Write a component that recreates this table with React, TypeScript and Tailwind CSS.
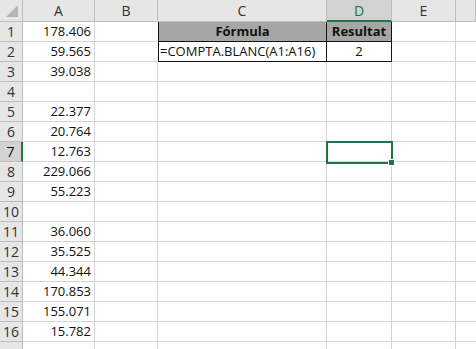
import type { ReactNode } from 'react';

const COLS = ['A', 'B', 'C', 'D', 'E', ''];
const VALUES = [
  '178.406', '59.565', '39.038', '', '22.377', '20.764', '12.763', '229.066',
  '55.223', '', '36.060', '35.525', '44.344', '170.853', '155.071', '15.782', '',
];

const SEL_COL = 'D';
const SEL_ROW = 7;
// last row only peeks in at the bottom edge, so its number is left off
const LAST_LABELLED = 16;

function Cell({ className = '', children }: { className?: string; children?: ReactNode }) {
  return <div className={`flex items-center overflow-hidden whitespace-nowrap ${className}`}>{children}</div>;
}

export default function App() {
  return (
    <div
      className="relative w-[476px] h-[349px] overflow-hidden bg-white text-[13px] text-[#111]"
      style={{ fontFamily: '"Open Sans", "Noto Sans", sans-serif' }}
    >
      <div className="grid grid-cols-[23px_72px_63px_169px_65px_64px_1fr] grid-rows-[22px_repeat(17,20px)]">
        {/* Corner */}
        <Cell className="bg-[#e6e6e6] border-r border-b border-[#bdbdbd] justify-end items-end">
          <svg width="14" height="14" viewBox="0 0 14 14" className="mr-[3px] mb-[3px]">
            <path d="M13 1V13H1Z" fill="#b5b5b5" />
          </svg>
        </Cell>

        {/* Column headers */}
        {COLS.map((c) => (
          <Cell
            key={`h-${c}`}
            className={`justify-center text-[14px] border-r ${
              c === SEL_COL
                ? 'bg-[#d2d2d2] text-[#217346] border-[#bdbdbd] border-b-2 border-b-[#217346]'
                : 'bg-[#e6e6e6] text-[#333] border-[#bdbdbd] border-b'
            }`}
          >
            {c}
          </Cell>
        ))}

        {VALUES.map((v, i) => {
          const row = i + 1;
          const inTable = row <= 2;
          return [
            <Cell
              key={`r-${row}`}
              className={`justify-center text-[14px] border-b ${
                row === SEL_ROW
                  ? 'bg-[#d2d2d2] border-[#bdbdbd] border-r-2 border-r-[#217346]'
                  : 'bg-[#e6e6e6] text-[#333] border-r border-[#bdbdbd]'
              }`}
            >
              {row <= LAST_LABELLED ? row : null}
            </Cell>,
            <Cell key={`a-${row}`} className="justify-end pr-[3px] border-r border-b border-[#d4d4d4]">
              {v}
            </Cell>,
            <Cell
              key={`b-${row}`}
              className={`border-b border-[#d4d4d4] ${inTable ? '' : 'border-r'}`}
            />,
            row === 1 ? (
              <Cell key="c-1" className="justify-center font-bold bg-[#a6a6a6] border-l border-r border-b border-[#111]">
                Fórmula
              </Cell>
            ) : row === 2 ? (
              <Cell key="c-2" className="pl-px border-l border-r border-b border-[#111]">
                =COMPTA.BLANC(A1:A16)
              </Cell>
            ) : (
              <Cell key={`c-${row}`} className="border-r border-b border-[#d4d4d4]" />
            ),
            row === 1 ? (
              <Cell key="d-1" className="justify-center font-bold bg-[#a6a6a6] border-r border-b border-[#111]">
                Resultat
              </Cell>
            ) : row === 2 ? (
              <Cell key="d-2" className="justify-center border-r border-b border-[#111]">
                2
              </Cell>
            ) : (
              <Cell key={`d-${row}`} className="border-r border-b border-[#d4d4d4]" />
            ),
            <Cell key={`e-${row}`} className="border-r border-b border-[#d4d4d4]" />,
            <Cell key={`f-${row}`} className="border-b border-[#d4d4d4]" />,
          ];
        })}
      </div>

      {/* Active cell D7 */}
      <div className="absolute left-[326px] top-[141px] w-[67px] h-[23px] border-2 border-[#217346] pointer-events-none">
        <div className="absolute -right-[4px] -bottom-[4px] w-[5px] h-[5px] bg-[#217346] border border-white box-content" />
      </div>
    </div>
  );
}
